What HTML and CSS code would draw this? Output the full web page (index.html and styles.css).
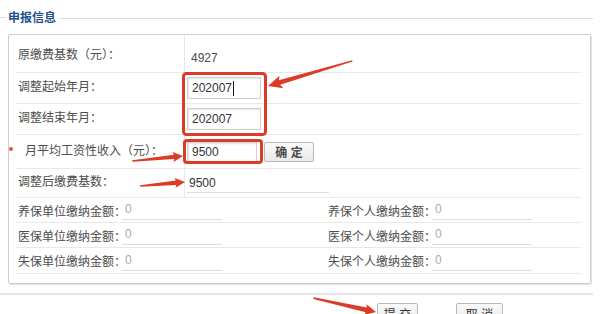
FILE: index.html
```html
<!DOCTYPE html>
<html lang="zh-CN">
  <head>
    <meta charset="utf-8" />
    <meta name="viewport" content="width=device-width, initial-scale=1.0" />
    <link rel="stylesheet" href="styles.css">
  </head>
  <body>
    <div class="page">
      <div class="section-title"><span>申报信息</span></div>

      <div class="form-box">
        <div class="row row-first">
          <div class="label">原缴费基数（元）：</div>
          <div class="value"><span class="plain">4927</span></div>
        </div>
        <div class="row row-start">
          <div class="label">调整起始年月：</div>
          <div class="value"><div class="input">202007<i class="caret"></i></div></div>
        </div>
        <div class="row row-end">
          <div class="label">调整结束年月：</div>
          <div class="value"><div class="input">202007</div></div>
        </div>
        <div class="row row-income">
          <div class="label required">月平均工资性收入（元）：</div>
          <div class="value">
            <div class="input input-short">9500</div>
            <button class="btn btn-confirm">确 定</button>
          </div>
        </div>
        <div class="row row-base">
          <div class="label">调整后缴费基数：</div>
          <div class="value"><span class="line-value">9500</span></div>
        </div>

        <div class="pair-row">
          <div class="pair"><span class="pair-label">养保单位缴纳金额：</span><span class="pair-value">0</span></div>
          <div class="pair"><span class="pair-label">养保个人缴纳金额：</span><span class="pair-value">0</span></div>
        </div>
        <div class="pair-row">
          <div class="pair"><span class="pair-label">医保单位缴纳金额：</span><span class="pair-value">0</span></div>
          <div class="pair"><span class="pair-label">医保个人缴纳金额：</span><span class="pair-value">0</span></div>
        </div>
        <div class="pair-row pair-row-last">
          <div class="pair"><span class="pair-label">失保单位缴纳金额：</span><span class="pair-value">0</span></div>
          <div class="pair"><span class="pair-label">失保个人缴纳金额：</span><span class="pair-value">0</span></div>
        </div>
      </div>
    </div>

    <div class="actions">
      <button class="btn btn-submit">提 交</button>
      <button class="btn btn-cancel">取 消</button>
    </div>

    <!-- red annotation marks drawn over the form -->
    <svg class="marks" width="603" height="314" viewBox="0 0 603 314">
      <g fill="none" stroke="#dc3b27" stroke-width="3">
        <rect x="183.5" y="73.5" width="82" height="61" rx="3" />
        <rect x="184.5" y="140.5" width="77" height="22" rx="2.5" />
      </g>
      <g fill="#dc3b27">
        <polygon transform="translate(268 86) rotate(163.4)" points="-88,-0.7 -12,-2.4 -14,-6.5 0,0 -14,6.5 -12,2.4 -88,0.7" />
        <polygon transform="translate(183 156) rotate(-5.6)" points="-51,-0.8 -9,-2.2 -10,-5 0,0 -10,5 -9,2.2 -51,0.8" />
        <polygon transform="translate(185 182) rotate(-5.1)" points="-45,-0.8 -9,-2.2 -10,-5 0,0 -10,5 -9,2.2 -45,0.8" />
        <polygon transform="translate(376 312) rotate(12.5)" points="-64,-0.8 -10,-2.4 -11,-5.5 0,0 -11,5.5 -10,2.4 -64,0.8" />
      </g>
    </svg>
  </body>
</html>
```

FILE: styles.css
```css
body {
  margin: 0;
  background: #fff;
  font-family: "Liberation Sans", "Noto Sans CJK SC", sans-serif;
  font-size: 12px;
  color: #4d4d4d;
}

.page {
  width: 593px;
  height: 293px;
  border-bottom: 2px solid #e4e4e4;
}

.section-title {
  display: flex;
  align-items: flex-start;
  height: 34px;
  padding-top: 10px;
  box-sizing: border-box;
}
.section-title::before {
  content: "";
  width: 6px;
  height: 1px;
  margin-top: 7px;
  background: #dcdcdc;
}
.section-title span {
  padding: 0 4px 0 2px;
  font-weight: bold;
  font-size: 12px;
  line-height: 16px;
  color: #23508f;
}
.section-title::after {
  content: "";
  flex: 1;
  height: 1px;
  margin-top: 8px;
  background: #dcdcdc;
}

.form-box {
  margin-left: 8px;
  width: 583px;
  box-sizing: border-box;
  border: 1px solid #cdcdcd;
  border-radius: 2px;
  box-shadow: 1px 1px 1px #e2e2e2;
  padding: 0 9px 9px 7px;
}

.row {
  display: flex;
  box-sizing: border-box;
  border-bottom: 1px solid #e8e8e8;
}
.row-first { height: 38px; }
.row-start { height: 31px; }
.row-end { height: 31px; }
.row-income { height: 34px; }
.row-base { height: 29px; }

.label {
  width: 169px;
  flex: none;
  box-sizing: border-box;
  padding: 0 0 5px 2px;
  border-right: 1px solid #e8e8e8;
  display: flex;
  align-items: center;
  white-space: nowrap;
}
.row-first .label {
  padding-bottom: 0;
}
.label.required::before {
  content: "";
  width: 4px;
  height: 4px;
  margin: 0 12px 0 -9px;
  border-radius: 50%;
  background: #e8553f;
}

.value {
  flex: 1;
  display: flex;
  align-items: center;
  padding-left: 2px;
}
.plain {
  padding: 8px 0 0 4px;
}

.input {
  width: 74px;
  height: 22px;
  box-sizing: border-box;
  border: 1px solid #cfcfcf;
  box-shadow: inset 1px 1px 2px #e6e6e6;
  padding-left: 4px;
  display: flex;
  align-items: center;
  color: #333;
}
.input-short {
  width: 70px;
  height: 20px;
}
.caret {
  width: 1px;
  height: 15px;
  background: #111;
  margin-left: 1px;
}

.btn {
  font-family: "Liberation Sans", "Noto Sans CJK SC", sans-serif;
  font-size: 12px;
  color: #333;
  border: 1px solid #b9b9b9;
  border-radius: 2px;
  background: linear-gradient(#fafafa, #e9e9e9);
  padding: 0;
}
.btn-confirm {
  margin-left: 7px;
  width: 50px;
  height: 20px;
  font-weight: bold;
  color: #4a4a4a;
}

.line-value {
  width: 140px;
  height: 18px;
  line-height: 18px;
  padding-left: 2px;
  border-bottom: 1px solid #dedede;
  color: #333;
}

.pair-row {
  display: grid;
  grid-template-columns: 310px 1fr;
  height: 25px;
  padding-left: 2px;
  box-sizing: border-box;
  border-bottom: 1px solid #e8e8e8;
}
.pair-row-last {
  height: 26px;
}
.pair {
  display: flex;
  align-items: center;
}
.pair-label {
  width: 104px;
  flex: none;
  white-space: nowrap;
}
.pair-value {
  width: 97px;
  height: 19px;
  line-height: 19px;
  padding-left: 3px;
  border-bottom: 1px solid #dedede;
  color: #aaa;
}

.actions {
  display: flex;
  gap: 38px;
  padding: 8px 0 0 377px;
}
.btn-submit {
  width: 41px;
  height: 20px;
}
.btn-cancel {
  width: 47px;
  height: 20px;
}

.marks {
  position: absolute;
  top: 0;
  left: 0;
  pointer-events: none;
}
```
